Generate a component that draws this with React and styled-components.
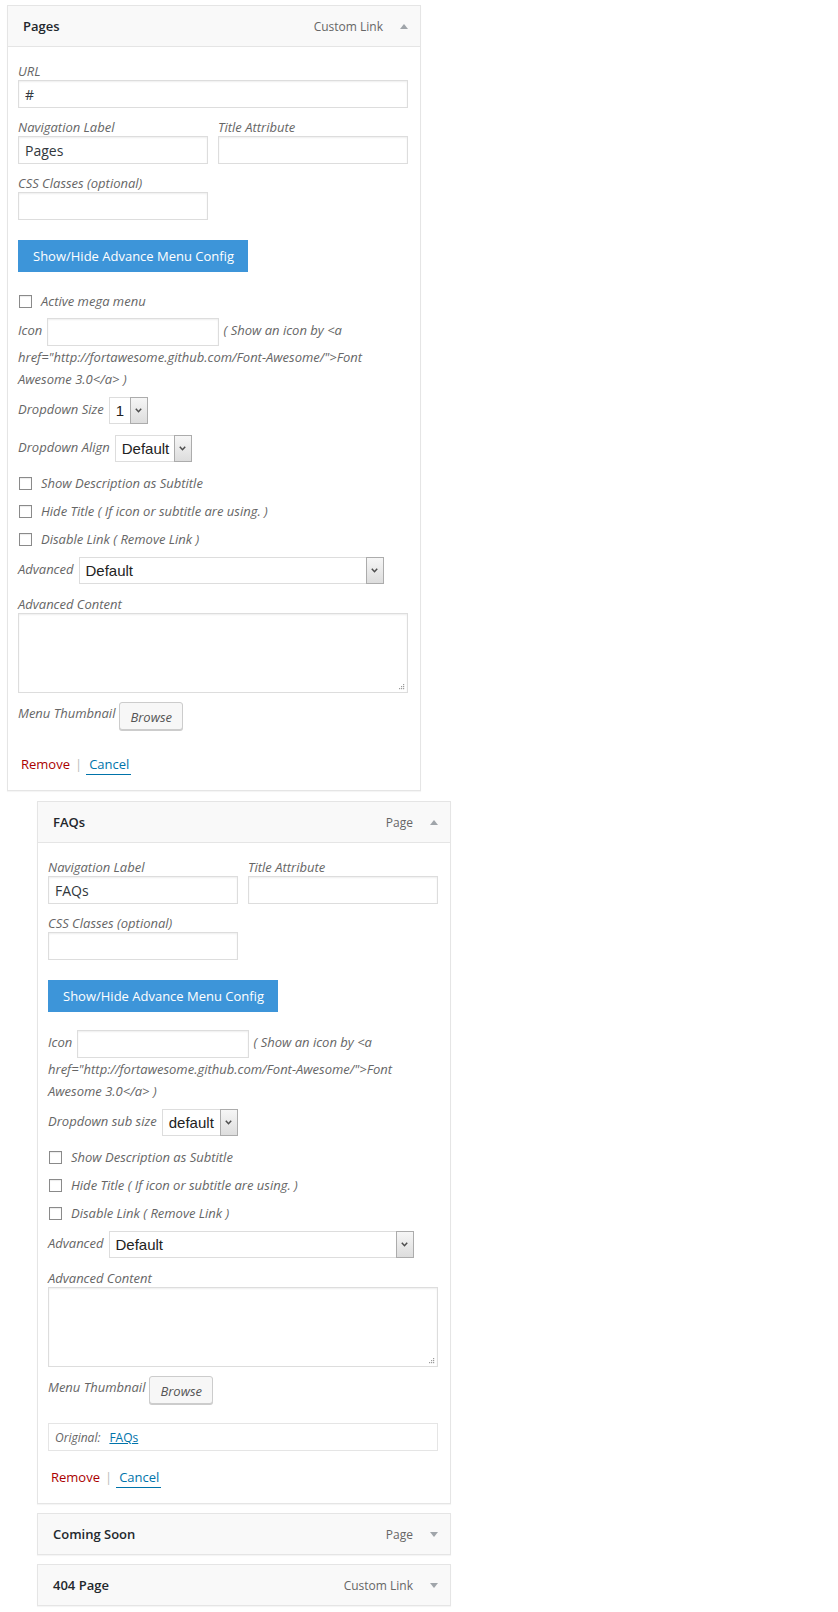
import React from "react";
import styled, { createGlobalStyle } from "styled-components";

const GlobalStyle = createGlobalStyle`
  html, body {
    margin: 0;
    padding: 0;
    background: #fff;
  }
  body {
    font-family: "Open Sans", "Liberation Sans", sans-serif;
    font-size: 13px;
    color: #444;
  }
  *, *::before, *::after {
    box-sizing: border-box;
  }
`;

const Page = styled.div`
  width: 838px;
  min-height: 1612px;
  padding: 5px 0 0 7px;
  display: flex;
  flex-direction: column;
  gap: 9px;
`;

const Item = styled.div`
  width: 414px;
  margin-left: ${(p) => p.$depth * 30}px;
  margin-top: ${(p) => (p.$depth && p.$open ? 1 : 0)}px;
  border: 1px solid #e5e5e5;
  background: #fff;
  box-shadow: 0 1px 1px rgba(0, 0, 0, 0.04);
`;

const Handle = styled.div`
  height: ${(p) => (p.$open ? 41 : 40)}px;
  display: flex;
  align-items: center;
  padding: 0 12px 0 15px;
  background: #f9f9f9;
  border-bottom: ${(p) => (p.$open ? "1px solid #e5e5e5" : "none")};
`;

const Title = styled.span`
  flex: 1;
  font-size: 13px;
  font-weight: 600;
  color: #23282d;
`;

const ItemType = styled.span`
  font-size: 12px;
  color: #666;
  margin-right: 17px;
`;

const Toggle = styled.span`
  width: 0;
  height: 0;
  border-left: 4px solid transparent;
  border-right: 4px solid transparent;
  ${(p) =>
    p.$up ? "border-bottom: 5px solid #a0a5aa;" : "border-top: 5px solid #a0a5aa;"}
`;

const Settings = styled.div`
  padding: 15px 12px 15px 10px;
`;

const FieldGrid = styled.div`
  display: grid;
  grid-template-columns: 190px 190px;
  column-gap: 10px;
  row-gap: 10px;
`;

const Field = styled.label`
  display: flex;
  flex-direction: column;
  grid-column: ${(p) => (p.$wide ? "1 / span 2" : "auto")};
`;

const Label = styled.span`
  font-style: italic;
  font-size: 13px;
  line-height: 18px;
  color: #666;
`;

const TextInput = styled.input`
  width: 100%;
  height: 28px;
  margin: 0;
  padding: 0 6px;
  border: 1px solid #ddd;
  box-shadow: inset 0 1px 2px rgba(0, 0, 0, 0.07);
  background: #fff;
  font-family: "Open Sans", sans-serif;
  font-size: 14px;
  color: #32373c;
  outline: none;
`;

const ToggleButton = styled.button`
  display: block;
  height: 32px;
  margin: 20px 0 0;
  padding: 0 14px 0 15px;
  border: none;
  background: #3d95d9;
  color: #fff;
  font-family: "Open Sans", sans-serif;
  font-size: 13px;
  cursor: pointer;
`;

const Advanced = styled.div`
  padding-top: 15px;
`;

const CheckRow = styled.label`
  display: flex;
  align-items: center;
  gap: 9px;
  height: 28px;
  padding-left: 1px;
  font-style: italic;
  color: #666;
`;

const Checkbox = styled.input.attrs({ type: "checkbox" })`
  appearance: none;
  width: 13px;
  height: 13px;
  margin: 0;
  border: 1px solid #8a8a8a;
  background: #fff;
  box-shadow: inset 0 1px 1px rgba(0, 0, 0, 0.08);
`;

const IconLine = styled.p`
  margin: 3px 0 0;
  line-height: 22px;
  font-style: italic;
  color: #666;
`;

const IconLabel = styled.span`
  margin-right: 5px;
`;

const InlineInput = styled(TextInput)`
  display: inline-block;
  width: 172px;
  vertical-align: middle;
  margin: 0 1px 0 0;
`;

const Checks = styled.div`
  margin-top: 7px;
`;

const SelectRow = styled.div`
  display: flex;
  align-items: center;
  gap: 5px;
  margin-top: ${(p) => p.$mt}px;
`;

const RowLabel = styled.span`
  font-style: italic;
  color: #666;
  margin-top: -3px;
`;

const SelectBox = styled.div`
  display: flex;
  width: ${(p) => p.$w}px;
  height: 27px;
  border: 1px solid #ddd;
  background: #fff;
  font-family: "Liberation Sans", Arial, sans-serif;
  font-size: 15px;
  color: #222;
`;

const SelectValue = styled.span`
  flex: 1;
  padding-left: 6px;
  line-height: 25px;
  white-space: nowrap;
  overflow: hidden;
`;

const SelectArrow = styled.span`
  width: 18px;
  margin: -1px -1px -1px 0;
  border: 1px solid #acacac;
  background: linear-gradient(#f6f6f6, #dddddd);
  display: flex;
  align-items: center;
  justify-content: center;
`;

const AreaField = styled.div`
  margin-top: 11px;
  display: flex;
  flex-direction: column;
`;

const AreaWrap = styled.div`
  position: relative;
  height: 80px;
`;

const TextArea = styled.textarea`
  display: block;
  width: 100%;
  height: 80px;
  margin: 0;
  border: 1px solid #ddd;
  box-shadow: inset 0 1px 2px rgba(0, 0, 0, 0.07);
  resize: none;
  outline: none;
`;

const Grip = styled.svg`
  position: absolute;
  right: 3px;
  bottom: 3px;
`;

const ThumbRow = styled.div`
  display: flex;
  align-items: flex-start;
  gap: 4px;
  margin-top: 9px;
`;

const ThumbLabel = styled.span`
  line-height: 22px;
  font-style: italic;
  color: #666;
`;

const BrowseButton = styled.button`
  height: 28px;
  padding: 2px 10px 0;
  border: 1px solid #ccc;
  border-radius: 3px;
  background: #f7f7f7;
  box-shadow: 0 1px 0 #ccc;
  font-family: "Open Sans", sans-serif;
  font-size: 13px;
  font-style: italic;
  color: #555;
`;

const OriginalBox = styled.div`
  margin-top: 19px;
  height: 28px;
  display: flex;
  align-items: center;
  padding: 0 6px;
  border: 1px solid #e5e5e5;
  font-size: 12px;
`;

const OriginalLabel = styled.span`
  font-style: italic;
  color: #666;
`;

const Link = styled.a`
  color: #0073aa;
  text-decoration: underline;
  margin-left: 9px;
`;

const Actions = styled.div`
  margin-top: ${(p) => p.$mt}px;
  padding-left: 3px;
  line-height: 22px;
  font-size: 13px;
`;

const Remove = styled.a`
  color: #a00;
  text-decoration: none;
`;

const Sep = styled.span`
  color: #bbb;
  margin: 0 4px 0 5px;
`;

const Cancel = styled.a`
  color: #0073aa;
  text-decoration: none;
  padding: 0 2px 1px 3px;
  border-bottom: 1px solid #0073aa;
`;

const Chevron = () => (
  <svg width="7" height="5" viewBox="0 0 7 5">
    <path d="M0.8 0.8 L3.5 3.7 L6.2 0.8" fill="none" stroke="#4d4d4d" strokeWidth="1.5" />
  </svg>
);

const Dropdown = ({ value, width }) => (
  <SelectBox $w={width}>
    <SelectValue>{value}</SelectValue>
    <SelectArrow>
      <Chevron />
    </SelectArrow>
  </SelectBox>
);

const Check = ({ children }) => (
  <CheckRow>
    <Checkbox />
    {children}
  </CheckRow>
);

function ItemSettings({ url, navLabel, megaMenu, dropdowns, original, actionsGap }) {
  return (
    <Settings>
      <FieldGrid>
        {url !== undefined && (
          <Field $wide>
            <Label>URL</Label>
            <TextInput defaultValue={url} />
          </Field>
        )}
        <Field>
          <Label>Navigation Label</Label>
          <TextInput defaultValue={navLabel} />
        </Field>
        <Field>
          <Label>Title Attribute</Label>
          <TextInput />
        </Field>
        <Field>
          <Label>CSS Classes (optional)</Label>
          <TextInput />
        </Field>
      </FieldGrid>
      <ToggleButton type="button">Show/Hide Advance Menu Config</ToggleButton>
      <Advanced>
        {megaMenu && <Check>Active mega menu</Check>}
        <IconLine>
          <IconLabel>Icon</IconLabel>
          <InlineInput />
          {' ( Show an icon by <a href="http://fortawesome.github.com/Font-Awesome/">Font Awesome 3.0</a> )'}
        </IconLine>
        {dropdowns.map((d, i) => (
          <SelectRow key={d.label} $mt={i === 0 ? 7 : 11}>
            <RowLabel>{d.label}</RowLabel>
            <Dropdown value={d.value} width={d.width} />
          </SelectRow>
        ))}
        <Checks>
          <Check>Show Description as Subtitle</Check>
          <Check>Hide Title ( If icon or subtitle are using. )</Check>
          <Check>Disable Link ( Remove Link )</Check>
        </Checks>
        <SelectRow $mt={4}>
          <RowLabel>Advanced</RowLabel>
          <Dropdown value="Default" width={305} />
        </SelectRow>
        <AreaField>
          <Label>Advanced Content</Label>
          <AreaWrap>
            <TextArea />
            <Grip width="6" height="6" viewBox="0 0 6 6">
              <rect x="4" y="0" width="1.2" height="1.2" fill="#9a9a9a" />
              <rect x="2" y="2" width="1.2" height="1.2" fill="#9a9a9a" />
              <rect x="4" y="2" width="1.2" height="1.2" fill="#9a9a9a" />
              <rect x="0" y="4" width="1.2" height="1.2" fill="#9a9a9a" />
              <rect x="2" y="4" width="1.2" height="1.2" fill="#9a9a9a" />
              <rect x="4" y="4" width="1.2" height="1.2" fill="#9a9a9a" />
            </Grip>
          </AreaWrap>
        </AreaField>
        <ThumbRow>
          <ThumbLabel>Menu Thumbnail</ThumbLabel>
          <BrowseButton type="button">Browse</BrowseButton>
        </ThumbRow>
        {original && (
          <OriginalBox>
            <OriginalLabel>Original:</OriginalLabel>
            <Link href="#">{original}</Link>
          </OriginalBox>
        )}
        <Actions $mt={actionsGap}>
          <Remove href="#">Remove</Remove>
          <Sep>|</Sep>
          <Cancel href="#">Cancel</Cancel>
        </Actions>
      </Advanced>
    </Settings>
  );
}

const MenuItem = ({ title, type, depth = 0, open, children }) => (
  <Item $depth={depth} $open={open}>
    <Handle $open={open}>
      <Title>{title}</Title>
      <ItemType>{type}</ItemType>
      <Toggle $up={open} />
    </Handle>
    {open && children}
  </Item>
);

export default function App() {
  return (
    <>
      <GlobalStyle />
      <Page>
        <MenuItem title="Pages" type="Custom Link" open>
          <ItemSettings
            url="#"
            navLabel="Pages"
            megaMenu
            dropdowns={[
              { label: "Dropdown Size", value: "1", width: 39 },
              { label: "Dropdown Align", value: "Default", width: 77 },
            ]}
            actionsGap={23}
          />
        </MenuItem>
        <MenuItem title="FAQs" type="Page" depth={1} open>
          <ItemSettings
            navLabel="FAQs"
            dropdowns={[{ label: "Dropdown sub size", value: "default", width: 76 }]}
            original="FAQs"
            actionsGap={15}
          />
        </MenuItem>
        <MenuItem title="Coming Soon" type="Page" depth={1} />
        <MenuItem title="404 Page" type="Custom Link" depth={1} />
      </Page>
    </>
  );
}
